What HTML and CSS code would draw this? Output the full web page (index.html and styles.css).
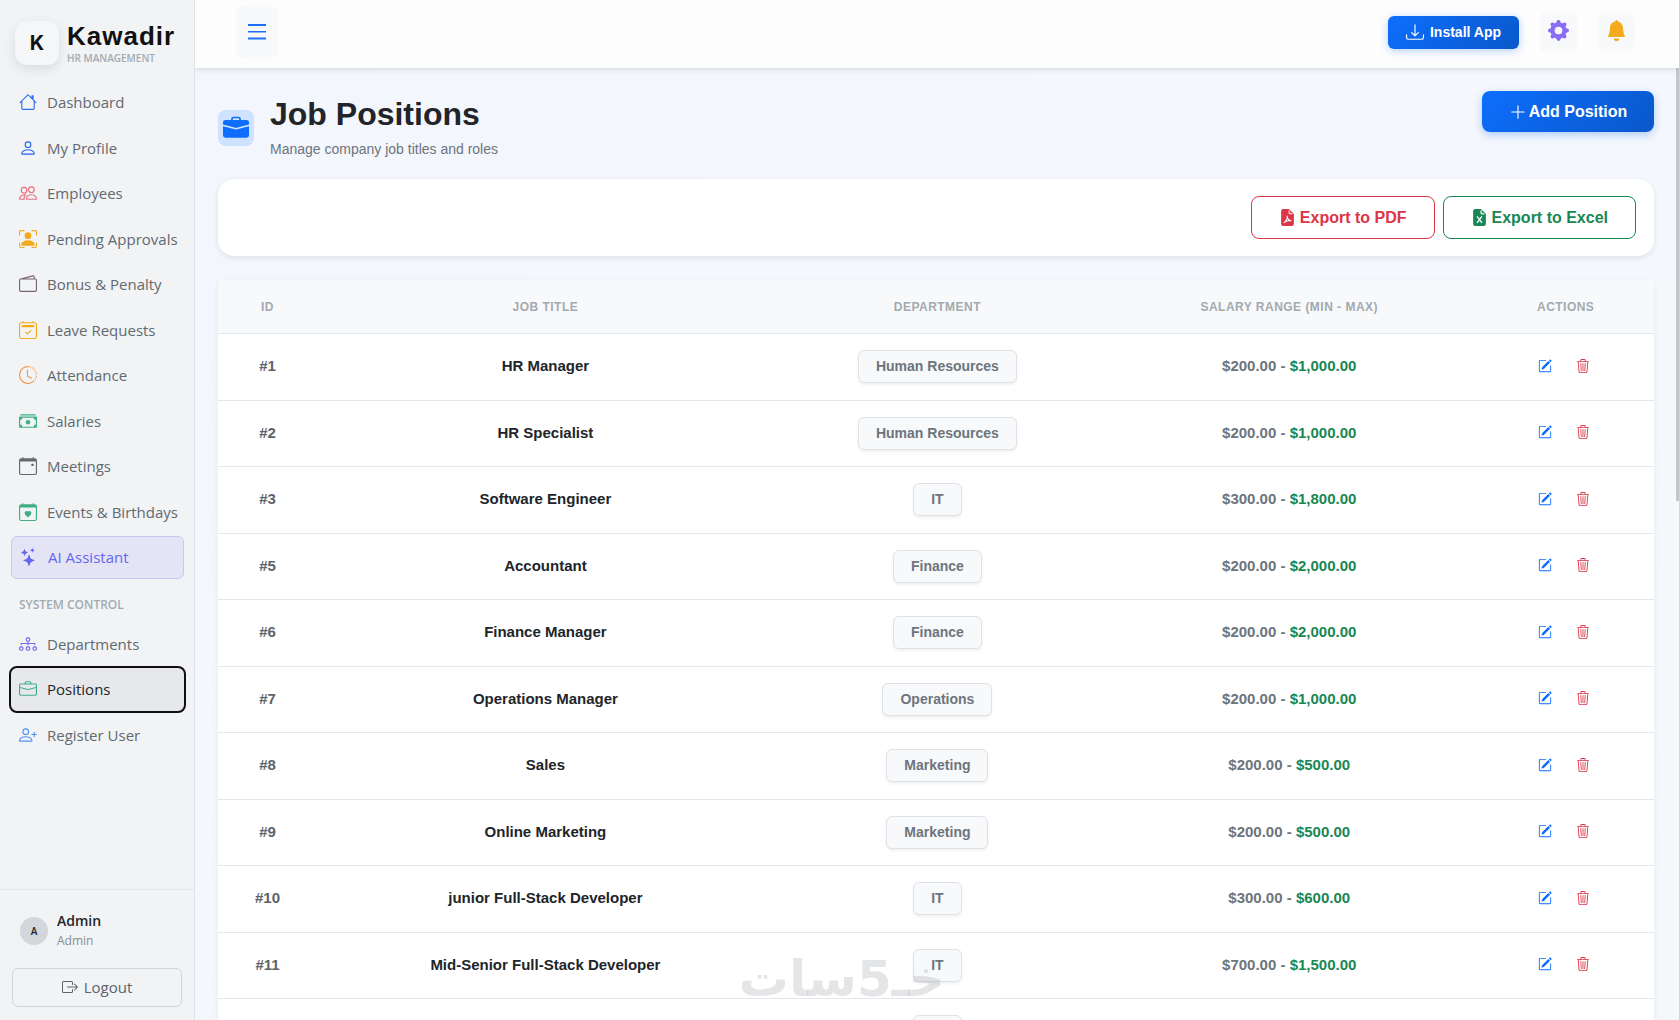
FILE: index.html
```html
<!DOCTYPE html>
<html lang="en">
<head>
    <meta charset="UTF-8">
    <meta name="viewport" content="width=device-width, initial-scale=1.0">
    <title>Job Positions - Kawadir</title>
    <link rel="stylesheet" href="styles.css">
</head>
<body>
    <svg class="sprite" aria-hidden="true">
        <symbol id="house" viewBox="0 0 16 16"><path d="M8.707 1.5a1 1 0 0 0-1.414 0L.646 8.146a.5.5 0 0 0 .708.708L2 8.207V13.5A1.5 1.5 0 0 0 3.5 15h9a1.5 1.5 0 0 0 1.5-1.5V8.207l.646.647a.5.5 0 0 0 .708-.708L13 5.793V2.5a.5.5 0 0 0-.5-.5h-1a.5.5 0 0 0-.5.5v1.293zM13 7.207V13.5a.5.5 0 0 1-.5.5h-9a.5.5 0 0 1-.5-.5V7.207l5-5z"/></symbol>
        <symbol id="person" viewBox="0 0 16 16"><path d="M8 8a3 3 0 1 0 0-6 3 3 0 0 0 0 6m2-3a2 2 0 1 1-4 0 2 2 0 0 1 4 0m4 8c0 1-1 1-1 1H3s-1 0-1-1 1-4 6-4 6 3 6 4m-1-.004c-.001-.246-.154-.986-.832-1.664C11.516 10.68 10.289 10 8 10s-3.516.68-4.168 1.332c-.678.678-.83 1.418-.832 1.664z"/></symbol>
        <symbol id="people" viewBox="0 0 16 16"><path d="M15 14s1 0 1-1-1-4-5-4-5 3-5 4 1 1 1 1zm-7.978-1L7 12.996c.001-.264.167-1.03.76-1.72C8.312 10.629 9.282 10 11 10c1.717 0 2.687.63 3.24 1.276.593.69.758 1.457.76 1.72l-.008.002-.014.002zM11 7a2 2 0 1 0 0-4 2 2 0 0 0 0 4m3-2a3 3 0 1 1-6 0 3 3 0 0 1 6 0M6.936 9.28a6 6 0 0 0-1.23-.247A7 7 0 0 0 5 9c-4 0-5 3-5 4q0 1 1 1h4.216A2.24 2.24 0 0 1 5 13c0-1.01.377-2.042 1.09-2.904.243-.294.526-.569.846-.816M4.92 10A5.5 5.5 0 0 0 4 13H1c0-.26.164-1.03.76-1.724.545-.636 1.492-1.256 3.16-1.275ZM1.5 5.5a3 3 0 1 1 6 0 3 3 0 0 1-6 0m3-2a2 2 0 1 0 0 4 2 2 0 0 0 0-4"/></symbol>
        <symbol id="person-box" viewBox="0 0 16 16"><path d="M1.5 1a.5.5 0 0 0-.5.5v3a.5.5 0 0 1-1 0v-3A1.5 1.5 0 0 1 1.5 0h3a.5.5 0 0 1 0 1zM11 .5a.5.5 0 0 1 .5-.5h3A1.5 1.5 0 0 1 16 1.5v3a.5.5 0 0 1-1 0v-3a.5.5 0 0 0-.5-.5h-3a.5.5 0 0 1-.5-.5M.5 11a.5.5 0 0 1 .5.5v3a.5.5 0 0 0 .5.5h3a.5.5 0 0 1 0 1h-3A1.5 1.5 0 0 1 0 14.5v-3a.5.5 0 0 1 .5-.5m15 0a.5.5 0 0 1 .5.5v3a1.5 1.5 0 0 1-1.5 1.5h-3a.5.5 0 0 1 0-1h3a.5.5 0 0 0 .5-.5v-3a.5.5 0 0 1 .5-.5"/><path d="M3 14s-1 0-1-1 1-4 6-4 6 3 6 4-1 1-1 1zm8-9a3 3 0 1 1-6 0 3 3 0 0 1 6 0"/></symbol>
        <symbol id="wallet" viewBox="0 0 16 16"><path d="M12.136.326A1.5 1.5 0 0 1 14 1.78V3h.5A1.5 1.5 0 0 1 16 4.5v9a1.5 1.5 0 0 1-1.5 1.5h-13A1.5 1.5 0 0 1 0 13.5v-9a1.5 1.5 0 0 1 1.432-1.499zM5.562 3H13V1.78a.5.5 0 0 0-.621-.484zM1.5 4a.5.5 0 0 0-.5.5v9a.5.5 0 0 0 .5.5h13a.5.5 0 0 0 .5-.5v-9a.5.5 0 0 0-.5-.5z"/></symbol>
        <symbol id="calendar-check" viewBox="0 0 16 16"><path d="M10.854 8.146a.5.5 0 0 1 0 .708l-3 3a.5.5 0 0 1-.708 0l-1.5-1.5a.5.5 0 1 1 .708-.708L7.5 10.793l2.646-2.647a.5.5 0 0 1 .708 0"/><path d="M3.5 0a.5.5 0 0 1 .5.5V1h8V.5a.5.5 0 0 1 1 0V1h1a2 2 0 0 1 2 2v11a2 2 0 0 1-2 2H2a2 2 0 0 1-2-2V3a2 2 0 0 1 2-2h1V.5a.5.5 0 0 1 .5-.5M2 2a1 1 0 0 0-1 1v11a1 1 0 0 0 1 1h12a1 1 0 0 0 1-1V3a1 1 0 0 0-1-1z"/><path d="M2.5 4a.5.5 0 0 1 .5-.5h10a.5.5 0 0 1 .5.5v1a.5.5 0 0 1-.5.5H3a.5.5 0 0 1-.5-.5z"/></symbol>
        <symbol id="clock" viewBox="0 0 16 16"><path d="M8.515 1.019A7 7 0 0 0 8 1V0a8 8 0 0 1 .589.022zm2.004.45a7 7 0 0 0-.985-.299l.219-.976q.576.129 1.126.342zm1.37.71a7 7 0 0 0-.439-.27l.493-.87a8 8 0 0 1 .979.654l-.615.789a7 7 0 0 0-.418-.302zm1.834 1.79a7 7 0 0 0-.653-.796l.724-.69q.406.429.747.91zm.744 1.352a7 7 0 0 0-.214-.468l.893-.45a8 8 0 0 1 .45 1.088l-.95.313a7 7 0 0 0-.179-.483m.53 2.507a7 7 0 0 0-.1-1.025l.985-.17q.1.58.116 1.17zm-.131 1.538q.05-.254.081-.51l.993.123a8 8 0 0 1-.23 1.155l-.964-.267q.069-.247.12-.501m-.952 2.379q.276-.436.486-.908l.914.405q-.24.54-.555 1.038zm-.964 1.205q.183-.183.35-.378l.758.653a8 8 0 0 1-.401.432z"/><path d="M8 1a7 7 0 1 0 4.95 11.95l.707.707A8.001 8.001 0 1 1 8 0z"/><path d="M7.5 3a.5.5 0 0 1 .5.5v5.21l3.248 1.856a.5.5 0 0 1-.496.868l-3.5-2A.5.5 0 0 1 7 9V3.5a.5.5 0 0 1 .5-.5"/></symbol>
        <symbol id="cash" viewBox="0 0 16 16"><path d="M1 3a1 1 0 0 1 1-1h12a1 1 0 0 1 1 1zm7 8a2 2 0 1 0 0-4 2 2 0 0 0 0 4"/><path d="M0 5a1 1 0 0 1 1-1h14a1 1 0 0 1 1 1v8a1 1 0 0 1-1 1H1a1 1 0 0 1-1-1zm3 0a2 2 0 0 1-2 2v4a2 2 0 0 1 2 2h10a2 2 0 0 1 2-2V7a2 2 0 0 1-2-2z"/></symbol>
        <symbol id="calendar-event" viewBox="0 0 16 16"><path d="M11 6.5a.5.5 0 0 1 .5-.5h1a.5.5 0 0 1 .5.5v1a.5.5 0 0 1-.5.5h-1a.5.5 0 0 1-.5-.5z"/><path d="M3.5 0a.5.5 0 0 1 .5.5V1h8V.5a.5.5 0 0 1 1 0V1h1a2 2 0 0 1 2 2v11a2 2 0 0 1-2 2H2a2 2 0 0 1-2-2V3a2 2 0 0 1 2-2h1V.5a.5.5 0 0 1 .5-.5M1 4v10a1 1 0 0 0 1 1h12a1 1 0 0 0 1-1V4z"/></symbol>
        <symbol id="calendar-heart" viewBox="0 0 16 16"><path d="M8 7.493c1.664-1.711 5.825 1.283 0 5.132-5.825-3.85-1.664-6.843 0-5.132"/><path d="M3.5 0a.5.5 0 0 1 .5.5V1h8V.5a.5.5 0 0 1 1 0V1h1a2 2 0 0 1 2 2v11a2 2 0 0 1-2 2H2a2 2 0 0 1-2-2V3a2 2 0 0 1 2-2h1V.5a.5.5 0 0 1 .5-.5M1 4v10a1 1 0 0 0 1 1h12a1 1 0 0 0 1-1V4z"/></symbol>
        <symbol id="stars" viewBox="0 0 16 16"><path d="M7.657 6.247c.11-.33.576-.33.686 0l.645 1.937a2.89 2.89 0 0 0 1.829 1.828l1.936.645c.33.11.33.576 0 .686l-1.937.645a2.89 2.89 0 0 0-1.828 1.829l-.645 1.936a.361.361 0 0 1-.686 0l-.645-1.937a2.89 2.89 0 0 0-1.828-1.828l-1.937-.645a.361.361 0 0 1 0-.686l1.937-.645a2.89 2.89 0 0 0 1.828-1.828zM3.794 1.148a.217.217 0 0 1 .412 0l.387 1.162c.173.518.579.924 1.097 1.097l1.162.387a.217.217 0 0 1 0 .412l-1.162.387A1.73 1.73 0 0 0 4.593 5.69l-.387 1.162a.217.217 0 0 1-.412 0L3.407 5.69A1.73 1.73 0 0 0 2.31 4.593l-1.162-.387a.217.217 0 0 1 0-.412l1.162-.387A1.73 1.73 0 0 0 3.407 2.31zM10.863.099a.145.145 0 0 1 .274 0l.258.774c.115.346.386.617.732.732l.774.258a.145.145 0 0 1 0 .274l-.774.258a1.16 1.16 0 0 0-.732.732l-.258.774a.145.145 0 0 1-.274 0l-.258-.774a1.16 1.16 0 0 0-.732-.732L9.1 2.137a.145.145 0 0 1 0-.274l.774-.258c.346-.115.617-.386.732-.732z"/></symbol>
        <symbol id="diagram" viewBox="0 0 16 16"><path d="M6 3.5A1.5 1.5 0 0 1 7.5 2h1A1.5 1.5 0 0 1 10 3.5v1A1.5 1.5 0 0 1 8.5 6v1H14a.5.5 0 0 1 .5.5v1a.5.5 0 0 1-1 0V8h-5v.5a.5.5 0 0 1-1 0V8h-5v.5a.5.5 0 0 1-1 0v-1A.5.5 0 0 1 2 7h5.5V6A1.5 1.5 0 0 1 6 4.5zM8.5 5a.5.5 0 0 0 .5-.5v-1a.5.5 0 0 0-.5-.5h-1a.5.5 0 0 0-.5.5v1a.5.5 0 0 0 .5.5zM0 11.5A1.5 1.5 0 0 1 1.5 10h1A1.5 1.5 0 0 1 4 11.5v1A1.5 1.5 0 0 1 2.5 14h-1A1.5 1.5 0 0 1 0 12.5zm1.5-.5a.5.5 0 0 0-.5.5v1a.5.5 0 0 0 .5.5h1a.5.5 0 0 0 .5-.5v-1a.5.5 0 0 0-.5-.5zm4.5.5A1.5 1.5 0 0 1 7.5 10h1a1.5 1.5 0 0 1 1.5 1.5v1A1.5 1.5 0 0 1 8.5 14h-1A1.5 1.5 0 0 1 6 12.5zm1.5-.5a.5.5 0 0 0-.5.5v1a.5.5 0 0 0 .5.5h1a.5.5 0 0 0 .5-.5v-1a.5.5 0 0 0-.5-.5zm4.5.5a1.5 1.5 0 0 1 1.5-1.5h1a1.5 1.5 0 0 1 1.5 1.5v1a1.5 1.5 0 0 1-1.5 1.5h-1a1.5 1.5 0 0 1-1.5-1.5zm1.5-.5a.5.5 0 0 0-.5.5v1a.5.5 0 0 0 .5.5h1a.5.5 0 0 0 .5-.5v-1a.5.5 0 0 0-.5-.5z"/></symbol>
        <symbol id="briefcase" viewBox="0 0 16 16"><path d="M6.5 1A1.5 1.5 0 0 0 5 2.5V3H1.5A1.5 1.5 0 0 0 0 4.5v8A1.5 1.5 0 0 0 1.5 14h13a1.5 1.5 0 0 0 1.5-1.5v-8A1.5 1.5 0 0 0 14.5 3H11v-.5A1.5 1.5 0 0 0 9.5 1zm0 1h3a.5.5 0 0 1 .5.5V3H6v-.5a.5.5 0 0 1 .5-.5m1.886 6.914L15 7.151V12.5a.5.5 0 0 1-.5.5h-13a.5.5 0 0 1-.5-.5V7.15l6.614 1.764a1.5 1.5 0 0 0 .772 0M1.5 4h13a.5.5 0 0 1 .5.5v1.616L8.129 7.948a.5.5 0 0 1-.258 0L1 6.116V4.5a.5.5 0 0 1 .5-.5"/></symbol>
        <symbol id="briefcase-fill" viewBox="0 0 16 16"><path d="M6.5 1A1.5 1.5 0 0 0 5 2.5V3H1.5A1.5 1.5 0 0 0 0 4.5v1.384l7.614 2.03a1.5 1.5 0 0 0 .772 0L16 5.884V4.5A1.5 1.5 0 0 0 14.5 3H11v-.5A1.5 1.5 0 0 0 9.5 1zm0 1h3a.5.5 0 0 1 .5.5V3H6v-.5a.5.5 0 0 1 .5-.5"/><path d="M0 12.5A1.5 1.5 0 0 0 1.5 14h13a1.5 1.5 0 0 0 1.5-1.5V6.85L8.129 8.947a.5.5 0 0 1-.258 0L0 6.85z"/></symbol>
        <symbol id="person-plus" viewBox="0 0 16 16"><path d="M6 8a3 3 0 1 0 0-6 3 3 0 0 0 0 6m2-3a2 2 0 1 1-4 0 2 2 0 0 1 4 0m4 8c0 1-1 1-1 1H1s-1 0-1-1 1-4 6-4 6 3 6 4m-1-.004c-.001-.246-.154-.986-.832-1.664C9.516 10.68 8.289 10 6 10s-3.516.68-4.168 1.332c-.678.678-.83 1.418-.832 1.664z"/><path d="M13.5 5a.5.5 0 0 1 .5.5V7h1.5a.5.5 0 0 1 0 1H14v1.5a.5.5 0 0 1-1 0V8h-1.5a.5.5 0 0 1 0-1H13V5.5a.5.5 0 0 1 .5-.5"/></symbol>
        <symbol id="logout" viewBox="0 0 16 16"><path d="M10 12.5a.5.5 0 0 1-.5.5h-8a.5.5 0 0 1-.5-.5v-9a.5.5 0 0 1 .5-.5h8a.5.5 0 0 1 .5.5v2a.5.5 0 0 0 1 0v-2A1.5 1.5 0 0 0 9.5 2h-8A1.5 1.5 0 0 0 0 3.5v9A1.5 1.5 0 0 0 1.5 14h8a1.5 1.5 0 0 0 1.5-1.5v-2a.5.5 0 0 0-1 0z"/><path d="M15.854 8.354a.5.5 0 0 0 0-.708l-3-3a.5.5 0 0 0-.708.708L14.293 7.5H5.5a.5.5 0 0 0 0 1h8.793l-2.147 2.146a.5.5 0 0 0 .708.708z"/></symbol>
        <symbol id="list" viewBox="0 0 18 16"><path d="M0 0h18v2H0zM0 7h18v1.5H0zM0 13.500h18v2H0z"/></symbol>
        <symbol id="download" viewBox="0 0 16 16"><path d="M.5 9.9a.5.5 0 0 1 .5.5v2.5a1 1 0 0 0 1 1h12a1 1 0 0 0 1-1v-2.5a.5.5 0 0 1 1 0v2.5a2 2 0 0 1-2 2H2a2 2 0 0 1-2-2v-2.5a.5.5 0 0 1 .5-.5"/><path d="M7.646 11.854a.5.5 0 0 0 .708 0l3-3a.5.5 0 0 0-.708-.708L8.5 10.293V1.5a.5.5 0 0 0-1 0v8.793L5.354 8.146a.5.5 0 1 0-.708.708z"/></symbol>
        <symbol id="gear" viewBox="0 0 16 16"><path d="M9.405 1.05c-.413-1.4-2.397-1.4-2.81 0l-.1.34a1.464 1.464 0 0 1-2.105.872l-.31-.17c-1.283-.698-2.686.705-1.987 1.987l.169.311c.446.82.023 1.841-.872 2.105l-.34.1c-1.4.413-1.4 2.397 0 2.81l.34.1a1.464 1.464 0 0 1 .872 2.105l-.17.31c-.698 1.283.705 2.686 1.987 1.987l.311-.169a1.464 1.464 0 0 1 2.105.872l.1.34c.413 1.4 2.397 1.4 2.81 0l.1-.34a1.464 1.464 0 0 1 2.105-.872l.31.17c1.283.698 2.686-.705 1.987-1.987l-.169-.311a1.464 1.464 0 0 1 .872-2.105l.34-.1c1.4-.413 1.4-2.397 0-2.81l-.34-.1a1.464 1.464 0 0 1-.872-2.105l.17-.31c.698-1.283-.705-2.686-1.987-1.987l-.311.169a1.464 1.464 0 0 1-2.105-.872zM8 10.93a2.929 2.929 0 1 1 0-5.86 2.929 2.929 0 0 1 0 5.858z"/></symbol>
        <symbol id="bell" viewBox="0 0 16 16"><path d="M8 16a2 2 0 0 0 2-2H6a2 2 0 0 0 2 2m.995-14.901a1 1 0 1 0-1.99 0A5 5 0 0 0 3 6c0 1.098-.5 6-2 7h14c-1.5-1-2-5.902-2-7 0-2.42-1.72-4.44-4.005-4.901"/></symbol>
        <symbol id="plus" viewBox="0 0 16 16"><path d="M8 2a.5.5 0 0 1 .5.5v5h5a.5.5 0 0 1 0 1h-5v5a.5.5 0 0 1-1 0v-5h-5a.5.5 0 0 1 0-1h5v-5A.5.5 0 0 1 8 2"/></symbol>
        <symbol id="file-pdf" viewBox="0 0 16 16"><path d="M4 0h5.3L14 4.7V14a2 2 0 0 1-2 2H4a2 2 0 0 1-2-2V2a2 2 0 0 1 2-2"/><path d="M9.5 1.5v2a1 1 0 0 0 1 1h2M7.7 6.5c.2 3 1.5 4.4 4 4.5-2.500-.5-5 .3-7.200 2C6.5 11.5 8 9 7.700 6.500" fill="none" stroke="#fff"/></symbol>
        <symbol id="file-excel" viewBox="0 0 16 16"><path d="M4 0h5.3L14 4.7V14a2 2 0 0 1-2 2H4a2 2 0 0 1-2-2V2a2 2 0 0 1 2-2"/><path d="M9.5 1.5v2a1 1 0 0 0 1 1h2M5.7 7l4.6 6M10.3 7l-4.600 6" fill="none" stroke="#fff" stroke-width="1.2"/></symbol>
        <symbol id="edit" viewBox="0 0 16 16"><path d="M15.502 1.94a.5.5 0 0 1 0 .706L14.459 3.69l-2-2L13.502.646a.5.5 0 0 1 .707 0l1.293 1.293zm-1.75 2.456-2-2L4.939 9.21a.5.5 0 0 0-.121.196l-.805 2.414a.25.25 0 0 0 .316.316l2.414-.805a.5.5 0 0 0 .196-.12z"/><path d="M1 13.5A1.5 1.5 0 0 0 2.5 15h11a1.5 1.5 0 0 0 1.5-1.5v-6a.5.5 0 0 0-1 0v6a.5.5 0 0 1-.5.5h-11a.5.5 0 0 1-.5-.5v-11a.5.5 0 0 1 .5-.5H9a.5.5 0 0 0 0-1H2.5A1.5 1.5 0 0 0 1 2.5z"/></symbol>
        <symbol id="trash" viewBox="0 0 16 16"><path d="M6.5 1h3a.5.5 0 0 1 .5.5v1H6v-1a.5.5 0 0 1 .5-.5M11 2.5v-1A1.5 1.5 0 0 0 9.5 0h-3A1.5 1.5 0 0 0 5 1.5v1H1.5a.5.5 0 0 0 0 1h.538l.853 10.66A2 2 0 0 0 4.885 16h6.23a2 2 0 0 0 1.994-1.84l.853-10.66h.538a.5.5 0 0 0 0-1zm1.958 1-.846 10.58a1 1 0 0 1-.997.92h-6.23a1 1 0 0 1-.997-.92L3.042 3.5zm-7.487 1a.5.5 0 0 1 .528.47l.5 8.5a.5.5 0 0 1-.998.06L5 5.03a.5.5 0 0 1 .47-.53Zm5.058 0a.5.5 0 0 1 .47.53l-.5 8.5a.5.5 0 1 1-.998-.06l.5-8.5a.5.5 0 0 1 .528-.47M8 4.5a.5.5 0 0 1 .5.5v8.5a.5.5 0 0 1-1 0V5a.5.5 0 0 1 .5-.5"/></symbol>
    </svg>

    <div class="app">
        <aside class="sidebar">
            <div class="brand">
                <div class="brand-logo">K</div>
                <div>
                    <div class="brand-name">Kawadir</div>
                    <div class="brand-sub">HR MANAGEMENT</div>
                </div>
            </div>

            <nav class="menu">
                <a href="#"><svg class="icon blue"><use href="#house"/></svg>Dashboard</a>
                <a href="#"><svg class="icon navy"><use href="#person"/></svg>My Profile</a>
                <a href="#"><svg class="icon pink"><use href="#people"/></svg>Employees</a>
                <a href="#"><svg class="icon amber"><use href="#person-box"/></svg>Pending Approvals</a>
                <a href="#"><svg class="icon wine"><use href="#wallet"/></svg>Bonus &amp; Penalty</a>
                <a href="#"><svg class="icon amber"><use href="#calendar-check"/></svg>Leave Requests</a>
                <a href="#"><svg class="icon orange"><use href="#clock"/></svg>Attendance</a>
                <a href="#"><svg class="icon green"><use href="#cash"/></svg>Salaries</a>
                <a href="#"><svg class="icon"><use href="#calendar-event"/></svg>Meetings</a>
                <a href="#"><svg class="icon green"><use href="#calendar-heart"/></svg>Events &amp; Birthdays</a>
                <a href="#" class="ai"><svg class="icon"><use href="#stars"/></svg>AI Assistant</a>
                <div class="menu-title">SYSTEM CONTROL</div>
                <a href="#"><svg class="icon violet"><use href="#diagram"/></svg>Departments</a>
                <a href="#" class="active"><svg class="icon green"><use href="#briefcase"/></svg>Positions</a>
                <a href="#"><svg class="icon sky"><use href="#person-plus"/></svg>Register User</a>
            </nav>

            <div class="sidebar-footer">
                <div class="user">
                    <div class="avatar">A</div>
                    <div>
                        <div class="user-name">Admin</div>
                        <div class="user-role">Admin</div>
                    </div>
                </div>
                <button type="button" class="logout"><svg class="icon"><use href="#logout"/></svg>Logout</button>
            </div>
        </aside>

        <div class="main">
            <header class="topbar">
                <button type="button" class="toggle" aria-label="Menu"><svg class="icon"><use href="#list"/></svg></button>
                <div class="topbar-actions">
                    <button type="button" class="install"><svg class="icon"><use href="#download"/></svg>Install App</button>
                    <button type="button" class="top-btn gear" aria-label="Settings"><svg class="icon"><use href="#gear"/></svg></button>
                    <button type="button" class="top-btn bell" aria-label="Notifications"><svg class="icon"><use href="#bell"/></svg></button>
                </div>
            </header>

            <main class="content">
                <div class="page-header">
                    <div class="page-icon"><svg class="icon"><use href="#briefcase-fill"/></svg></div>
                    <div class="page-title">
                        <h1>Job Positions</h1>
                        <p>Manage company job titles and roles</p>
                    </div>
                    <button type="button" class="add"><svg class="icon"><use href="#plus"/></svg>Add Position</button>
                </div>

                <div class="export-card">
                    <button type="button" class="export pdf"><svg class="icon"><use href="#file-pdf"/></svg>Export to PDF</button>
                    <button type="button" class="export excel"><svg class="icon"><use href="#file-excel"/></svg>Export to Excel</button>
                </div>

                <table>
                    <thead>
                        <tr>
                            <th class="col-id">ID</th>
                            <th class="col-title">JOB TITLE</th>
                            <th class="col-dept">DEPARTMENT</th>
                            <th class="col-salary">SALARY RANGE (MIN - MAX)</th>
                            <th class="col-actions">ACTIONS</th>
                        </tr>
                    </thead>
                    <tbody id="positionsBody"></tbody>
                </table>
            </main>
            <div class="scroll-thumb"></div>
        </div>
    </div>

    <div class="watermark" lang="ar" dir="rtl">خـ5سات</div>

    <script>
        const positions = [
            { id: 1, title: "HR Manager", department: "Human Resources", min: "$200.00", max: "$1,000.00" },
            { id: 2, title: "HR Specialist", department: "Human Resources", min: "$200.00", max: "$1,000.00" },
            { id: 3, title: "Software Engineer", department: "IT", min: "$300.00", max: "$1,800.00" },
            { id: 5, title: "Accountant", department: "Finance", min: "$200.00", max: "$2,000.00" },
            { id: 6, title: "Finance Manager", department: "Finance", min: "$200.00", max: "$2,000.00" },
            { id: 7, title: "Operations Manager", department: "Operations", min: "$200.00", max: "$1,000.00" },
            { id: 8, title: "Sales", department: "Marketing", min: "$200.00", max: "$500.00" },
            { id: 9, title: "Online Marketing", department: "Marketing", min: "$200.00", max: "$500.00" },
            { id: 10, title: "junior Full-Stack Developer", department: "IT", min: "$300.00", max: "$600.00" },
            { id: 11, title: "Mid-Senior Full-Stack Developer", department: "IT", min: "$700.00", max: "$1,500.00" },
            { id: 12, title: "Senior Full-Stack Developer", department: "IT", min: "$900.00", max: "$2,000.00" }
        ];

        function renderPositions() {
            const tableBody = document.getElementById('positionsBody');
            tableBody.innerHTML = '';
            positions.forEach(position => {
                const row = document.createElement('tr');
                row.innerHTML = `
                    <td class="id">#${position.id}</td>
                    <td>${position.title}</td>
                    <td class="dept"><span class="badge">${position.department}</span></td>
                    <td class="salary">${position.min} - <span class="max">${position.max}</span></td>
                    <td class="actions">
                        <button type="button" class="edit" aria-label="Edit"><svg class="icon"><use href="#edit"/></svg></button>
                        <button type="button" class="delete" aria-label="Delete"><svg class="icon"><use href="#trash"/></svg></button>
                    </td>
                `;
                tableBody.appendChild(row);
            });
        }

        renderPositions();
    </script>
</body>
</html>
```
FILE: styles.css
```css
* {
    box-sizing: border-box;
}
body {
    margin: 0;
    font-family: "Liberation Sans", Arial, sans-serif;
    color: #212529;
    background: #f4f7fc;
}
button {
    font-family: inherit;
    cursor: pointer;
    display: flex;
    align-items: center;
    justify-content: center;
}
.sprite {
    display: none;
}
.icon {
    width: 18px;
    height: 18px;
    fill: currentColor;
    flex-shrink: 0;
}
.app {
    display: flex;
    height: 100vh;
}

/* Sidebar */
.sidebar {
    width: 195px;
    flex-shrink: 0;
    display: flex;
    flex-direction: column;
    background: #f1f3f5;
    border-right: 1px solid #dee2e6;
    font-family: "Open Sans", "Noto Sans", sans-serif;
}
.brand {
    display: flex;
    align-items: center;
    gap: 8px;
    padding: 21px 14px 0 15px;
    font-family: "Liberation Sans", Arial, sans-serif;
}
.brand-logo {
    width: 44px;
    height: 44px;
    border-radius: 12px;
    background: #f5f6f7;
    box-shadow: 0 4px 12px rgba(0, 0, 0, 0.1);
    display: flex;
    align-items: center;
    justify-content: center;
    font-family: Inter, sans-serif;
    font-size: 20px;
    font-weight: 700;
    color: #111;
}
.brand-name {
    font-size: 26px;
    line-height: 30px;
    font-weight: bold;
    letter-spacing: 1px;
    color: #111;
}
.brand-sub {
    font-family: "Open Sans", sans-serif;
    font-size: 10px;
    line-height: 14px;
    font-weight: 600;
    color: #a3abb2;
}
.menu {
    display: flex;
    flex-direction: column;
    gap: 3px;
    padding: 16px 10px 0 11px;
}
.menu a {
    display: flex;
    align-items: center;
    gap: 10px;
    padding: 10px 8px;
    border-radius: 6px;
    color: #626a71;
    font-size: 15px;
    line-height: 1.5;
    font-weight: 500;
    text-decoration: none;
    white-space: nowrap;
}
.menu a.ai {
    padding: 9px 8px;
    border: 1px solid #c3c9f2;
    background: #e5e4f5;
    color: #6366f1;
}
.menu a.active {
    background: #e7e8eb;
    color: #212529;
    outline: 2px solid #101010;
}
.menu-title {
    padding: 12px 8px 4px;
    font-size: 12px;
    line-height: 22px;
    font-weight: 600;
    color: #a3abb2;
}
.blue { color: #2f6df6; }
.navy { color: #2563eb; }
.pink { color: #e8707c; }
.amber { color: #f3ab1c; }
.wine { color: #7b6670; }
.orange { color: #f0954a; }
.green { color: #3fae83; }
.violet { color: #7367f0; }
.sky { color: #4f93f7; }
.sidebar-footer {
    margin-top: auto;
    padding: 21px 12px 13px;
    border-top: 1px solid #e3e6e9;
}
.user {
    display: flex;
    align-items: center;
    gap: 9px;
    padding: 0 8px;
    margin-bottom: 17px;
}
.avatar {
    width: 28px;
    height: 28px;
    border-radius: 50%;
    background: #d3d6da;
    display: flex;
    align-items: center;
    justify-content: center;
    font-size: 10px;
    font-weight: 600;
}
.user-name {
    font-size: 14px;
    line-height: 20px;
    font-weight: 600;
}
.user-role {
    font-size: 12px;
    line-height: 20px;
    color: #868e96;
}
.logout {
    width: 100%;
    height: 39px;
    padding: 0 0 1px;
    gap: 6px;
    border: 1px solid #ced4da;
    border-radius: 6px;
    background: transparent;
    color: #5c636a;
    font-size: 15px;
    font-weight: 500;
}
.logout .icon {
    width: 16px;
    height: 16px;
}

/* Top bar */
.main {
    flex: 1;
    min-width: 0;
    display: flex;
    flex-direction: column;
    position: relative;
    overflow: hidden;
}
.topbar {
    display: flex;
    align-items: flex-start;
    justify-content: space-between;
    height: 68px;
    flex-shrink: 0;
    padding: 5px 44px 0 41px;
    background: #fdfdfe;
    box-shadow: 0 1px 6px rgba(0, 0, 0, 0.14);
    z-index: 1;
}
.toggle {
    width: 42px;
    height: 54px;
    padding: 0;
    border: none;
    border-radius: 8px;
    background: #f8f9fb;
    color: #1b6ef5;
}
.toggle .icon {
    height: 16px;
}
.topbar-actions {
    display: flex;
    align-items: center;
    gap: 21px;
    padding-top: 7px;
}
.install {
    width: 131px;
    height: 33px;
    padding: 0;
    gap: 6px;
    border: none;
    border-radius: 6px;
    background: linear-gradient(135deg, #0d6efd, #0a58ca);
    box-shadow: 0 2px 8px rgba(13, 110, 253, 0.3);
    color: #fff;
    font-size: 14px;
    font-weight: bold;
}
.top-btn {
    width: 37px;
    height: 40px;
    padding: 0 0 4px;
    border: none;
    border-radius: 6px;
    background: #f8f9fb;
}
.top-btn .icon {
    width: 21px;
    height: 21px;
}
.gear { color: #8b6cf6; }
.bell { color: #f3ab1c; }

/* Page */
.content {
    flex: 1;
    overflow: hidden;
    padding: 23px 25px 0 23px;
    background: linear-gradient(135deg, #f3f6fc, #f5f8fb);
}
.page-header {
    display: flex;
    align-items: flex-start;
    margin-bottom: 21px;
}
.page-icon {
    width: 36px;
    height: 36px;
    margin: 19px 16px 0 0;
    border-radius: 8px;
    background: #cfe2ff;
    color: #0d6efd;
    display: flex;
    align-items: center;
    justify-content: center;
}
.page-icon .icon {
    width: 26px;
    height: 26px;
}
.page-title {
    flex: 1;
}
h1 {
    margin: 0 0 4px;
    font-size: 32px;
    line-height: 46px;
    font-weight: bold;
}
.page-title p {
    margin: 0;
    font-size: 14px;
    line-height: 17px;
    color: #6c757d;
}
.add {
    width: 172px;
    height: 41px;
    padding: 0;
    gap: 2px;
    border: none;
    border-radius: 8px;
    background: linear-gradient(135deg, #0d6efd, #0a58ca);
    box-shadow: 0 3px 9px rgba(13, 110, 253, 0.3);
    color: #fff;
    font-size: 16px;
    font-weight: bold;
}
.export-card {
    display: flex;
    justify-content: flex-end;
    gap: 8px;
    padding: 17px 18px;
    margin-bottom: 24px;
    border-radius: 16px;
    background: #fff;
    box-shadow: 0 2px 6px rgba(0, 0, 0, 0.09);
}
.export {
    height: 43px;
    padding: 0 27px;
    gap: 4px;
    border: 1px solid;
    border-radius: 8px;
    background: #fff;
    font-size: 16px;
    font-weight: bold;
}
.export .icon {
    width: 17px;
    height: 17px;
}
.pdf { color: #dc3545; }
.excel { color: #198754; }

table {
    width: 100%;
    table-layout: fixed;
    border-collapse: separate;
    border-spacing: 0;
    background: #fff;
    box-shadow: 0 2px 6px rgba(0, 0, 0, 0.06);
}
th {
    padding: 18px 8px 17px;
    background: #f8f9fb;
    border-bottom: 1px solid #e3e6ea;
    color: #a3a9af;
    font-size: 12px;
    line-height: 18px;
    letter-spacing: 0.04em;
}
.col-id { width: 6.9%; }
.col-title { width: 31.8%; }
.col-dept { width: 22.8%; }
.col-salary { width: 26.2%; }
td {
    padding: 21px 8px 22px;
    border-bottom: 1px solid #e3e6ea;
    text-align: center;
    font-size: 15px;
    line-height: 1.5;
    font-weight: bold;
}
.id {
    color: #5c636a;
}
.dept {
    padding-top: 0;
    padding-bottom: 0;
}
.actions {
    padding: 0 11px 3px 8px;
}
.badge {
    display: inline-block;
    vertical-align: middle;
    padding: 5px 17px;
    border: 1px solid #dee2e6;
    border-radius: 6px;
    background: #f8f9fb;
    box-shadow: 0 2px 3px rgba(0, 0, 0, 0.06);
    color: #6c757d;
    font-size: 14px;
    line-height: 21px;
}
.salary {
    color: #6c757d;
}
.max {
    color: #198754;
}
.actions button {
    display: inline-flex;
    padding: 4px 10px;
    border: none;
    background: none;
    vertical-align: middle;
}
.actions .icon {
    width: 14px;
    height: 14px;
}
.edit { color: #0d6efd; }
.delete { color: #dc3545; }

.scroll-thumb {
    position: absolute;
    top: 68px;
    right: 0;
    width: 3px;
    height: 433px;
    background: #c4c6c9;
}
.watermark {
    position: absolute;
    left: 44%;
    bottom: 6px;
    font-family: "DejaVu Sans", sans-serif;
    font-size: 50px;
    line-height: 70px;
    font-weight: bold;
    color: rgba(120, 125, 135, 0.2);
    pointer-events: none;
}
```
